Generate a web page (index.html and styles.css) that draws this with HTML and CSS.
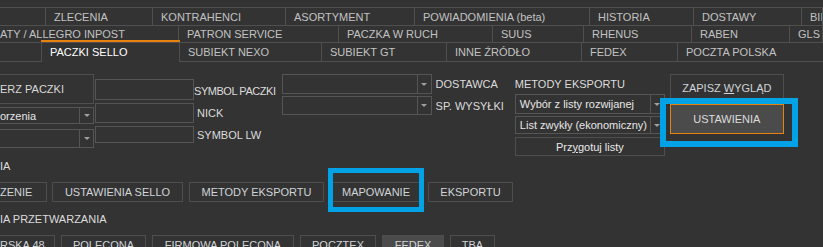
FILE: index.html
```html
<!DOCTYPE html>
<html lang="pl">
<head>
<meta charset="utf-8">
<title>Paczki Sello</title>
<link rel="stylesheet" href="styles.css">
</head>
<body>
<div class="tabs">
  <div class="tabrow row1">
    <div class="tab"></div>
    <div class="tab">ZLECENIA</div>
    <div class="tab">KONTRAHENCI</div>
    <div class="tab">ASORTYMENT</div>
    <div class="tab">POWIADOMIENIA (beta)</div>
    <div class="tab">HISTORIA</div>
    <div class="tab">DOSTAWY</div>
    <div class="tab">BIE</div>
  </div>
  <div class="tabrow row2">
    <div class="tab cut">ATY / ALLEGRO INPOST</div>
    <div class="tab">PATRON SERVICE</div>
    <div class="tab">PACZKA W RUCH</div>
    <div class="tab">SUUS</div>
    <div class="tab">RHENUS</div>
    <div class="tab">RABEN</div>
    <div class="tab">GLS</div>
  </div>
  <div class="tabrow row3">
    <div class="tab"></div>
    <div class="tab active">PACZKI SELLO</div>
    <div class="tab">SUBIEKT NEXO</div>
    <div class="tab">SUBIEKT GT</div>
    <div class="tab">INNE ŹRÓDŁO</div>
    <div class="tab">FEDEX</div>
    <div class="tab last">POCZTA POLSKA</div>
  </div>
</div>

<div class="form">
  <div class="col col-a">
    <div class="btn big">ERZ PACZKI</div>
    <div class="select s1"><span class="val">orzenia</span><span class="arrow"></span></div>
    <div class="select s2"><span class="val"></span><span class="arrow"></span></div>
  </div>
  <div class="col col-b">
    <div class="pair p1"><div class="input i1"></div><span class="label l-sym">SYMBOL PACZKI</span></div>
    <div class="pair p2"><div class="input i2"></div><span class="label l-ind">NICK</span></div>
    <div class="pair p3"><div class="input i3"></div><span class="label l-ind">SYMBOL LW</span></div>
  </div>
  <div class="col col-d">
    <div class="pair"><div class="select wide d1"><span class="val"></span><span class="arrow"></span></div><span class="label">DOSTAWCA</span></div>
    <div class="pair"><div class="select wide d2"><span class="val"></span><span class="arrow"></span></div><span class="label">SP. WYSYŁKI</span></div>
  </div>
  <div class="col col-f">
    <span class="label head">METODY EKSPORTU</span>
    <div class="select m1"><span class="val">Wybór z listy rozwijanej</span><span class="arrow"></span></div>
    <div class="select m2"><span class="val">List zwykły (ekonomiczny)</span><span class="arrow"></span></div>
    <div class="btn small"><span>Prz<u>y</u>gotuj listy</span></div>
  </div>
  <div class="col col-g">
    <div class="btn save"><span>ZAPISZ <u>W</u>YGLĄD</span></div>
    <div class="btn settings hl hl-a">USTAWIENIA</div>
  </div>
</div>

<div class="section">
  <div class="label sect">IA</div>
  <div class="btnrow row-a">
    <div class="btn b-cut1">ZENIE</div>
    <div class="btn b-sello">USTAWIENIA SELLO</div>
    <div class="btn b-met">METODY EKSPORTU</div>
    <div class="btn b-map hl hl-b">MAPOWANIE</div>
    <div class="btn b-exp">EKSPORTU</div>
  </div>
  <div class="label sect sect2">IA PRZETWARZANIA</div>
  <div class="btnrow row-b">
    <div class="btn c-cut">RSKA 48</div>
    <div class="btn c-pol">POLECONA</div>
    <div class="btn c-firm">FIRMOWA POLECONA</div>
    <div class="btn c-pocz">POCZTEX</div>
    <div class="btn c-fed on">FEDEX</div>
    <div class="btn c-tba">TBA</div>
  </div>
</div>
</body>
</html>
```

FILE: styles.css
```css
* { box-sizing: border-box; }
html, body {
  margin: 0;
  padding: 0;
}
body {
  width: 823px;
  height: 247px;
  overflow: hidden;
  background: #333333;
  font-family: "Liberation Sans", Arial, sans-serif;
  font-size: 11px;
  color: #c4c4c4;
}

/* ---------- tabs ---------- */
.tabs {
  margin-top: 7px;
  border-top: 1px solid #4f4f4f;
}
.tabrow {
  display: grid;
  border-bottom: 1px solid #4f4f4f;
}
.row1 { height: 18px; grid-template-columns: 46px 107px 133px 129px 175px 104px 108px 1fr; }
.row2 { height: 17px; grid-template-columns: 179px 160px 154px 91px 108px 98px 1fr; }
.row3 { height: 19px; grid-template-columns: 42px 138px 142px 125px 135px 96px 1fr; }
.tab {
  border-right: 1px solid #4f4f4f;
  padding-left: 8px;
  white-space: nowrap;
  overflow: hidden;
  display: flex;
  align-items: center;
  color: #c2c2c2;
}
.tab.cut { padding-left: 0; }
.tab.last { border-right: 0; }
.tab.active {
  position: relative;
  overflow: visible;
  color: #ffffff;
}
.tab.active::before {
  content: "";
  position: absolute;
  left: -1px;
  right: -1px;
  top: -3px;
  height: 2px;
  background: #e8820e;
}
.tab.active::after {
  content: "";
  position: absolute;
  left: 0;
  right: 0;
  bottom: -1px;
  height: 1px;
  background: #333333;
}

/* ---------- form ---------- */
.form {
  display: flex;
  align-items: flex-start;
  margin-top: 12px;
}
.col { display: flex; flex-direction: column; }
.btn {
  border: 1px solid #4e4e4e;
  display: flex;
  align-items: center;
  justify-content: center;
  color: #d0d4d8;
  white-space: nowrap;
}
.select {
  display: flex;
  border: 1px solid #555555;
  color: #e6e6e6;
}
.select .val {
  flex: 1;
  padding-left: 4px;
  display: flex;
  align-items: center;
  white-space: nowrap;
  overflow: hidden;
}
.select .arrow {
  width: 14px;
  border-left: 1px solid #555555;
  display: flex;
  align-items: center;
  justify-content: center;
}
.select .arrow::before {
  content: "";
  border-left: 3px solid transparent;
  border-right: 3px solid transparent;
  border-top: 3px solid #a0a0a0;
}
.input { border: 1px solid #555555; width: 99px; }
.label { color: #dcdcdc; white-space: nowrap; }

.col-a { width: 94px; }
.col-a .btn.big { height: 30px; justify-content: flex-start; border-left: 0; color: #d8d8d8; }
.col-a .select { border-left: 0; }
.col-a .select .val { padding-left: 0; }
.s1 { margin-top: 3px; height: 17px; }
.s2 { margin-top: 5px; height: 19px; }

.col-b { margin-left: 1px; margin-top: 5px; }
.pair { display: flex; align-items: center; }
.p2, .p3 { margin-top: 3px; }
.i1 { height: 21px; }
.i2 { height: 20px; }
.i3 { height: 17px; }
.l-sym { margin-left: 0; margin-top: 3px; letter-spacing: -0.45px; }
.l-ind { margin-left: 3px; }

.col-d { margin-left: 6px; }
.col-d .pair + .pair { margin-top: 2px; }
.select.wide { width: 150px; margin-right: 4px; }
.d1 { height: 20px; }
.d2 { height: 19px; }

.col-f { margin-left: 11px; width: 150px; }
.head { height: 19px; display: flex; align-items: center; margin-top: 0; }
.m1 { margin-top: 1px; height: 20px; }
.m2 { margin-top: 2px; height: 18px; }
.btn.small { margin-top: 3px; height: 19px; color: #e8e8e8; }

.col-g { margin-left: 5px; width: 114px; }
.btn.save { height: 28px; }
.btn.settings {
  margin-top: 2px;
  height: 30px;
  background: #4b4b4b;
  border-color: #e8820e;
  color: #dcdcdc;
}

/* highlight overlays */
.hl { position: relative; }
.hl::after {
  content: "";
  position: absolute;
  pointer-events: none;
  border-style: solid;
  border-color: #02a3e6;
}
.hl-a::after { top: -7px; left: -11px; right: -15px; bottom: -14px; border-width: 6px; }
.hl-b::after { top: -15px; left: -5px; right: -5px; bottom: -11px; border-width: 5px; }

/* ---------- lower section ---------- */
.section { margin-top: 3px; }
.sect { height: 14px; display: flex; align-items: center; }
.btnrow { display: flex; }
.btnrow .btn { height: 20px; flex: none; }
.row-a { margin-top: 9px; }
.b-cut1 { width: 47px; border-left: 0; justify-content: flex-start; }
.b-sello { width: 131px; margin-left: 5px; }
.b-met { width: 135px; margin-left: 6px; }
.b-map { width: 88px; margin-left: 8px; }
.b-exp { width: 85px; margin-left: 8px; }
.sect2 { margin-top: 10px; }
.row-b { margin-top: 9px; }
.c-cut { width: 55px; border-left: 0; justify-content: flex-start; }
.c-pol { width: 85px; margin-left: 6px; }
.c-firm { width: 142px; margin-left: 6px; }
.c-pocz { width: 76px; margin-left: 6px; }
.c-fed { width: 62px; margin-left: 6px; }
.c-fed.on { background: #4b4b4b; }
.c-tba { width: 45px; margin-left: 6px; }
```
